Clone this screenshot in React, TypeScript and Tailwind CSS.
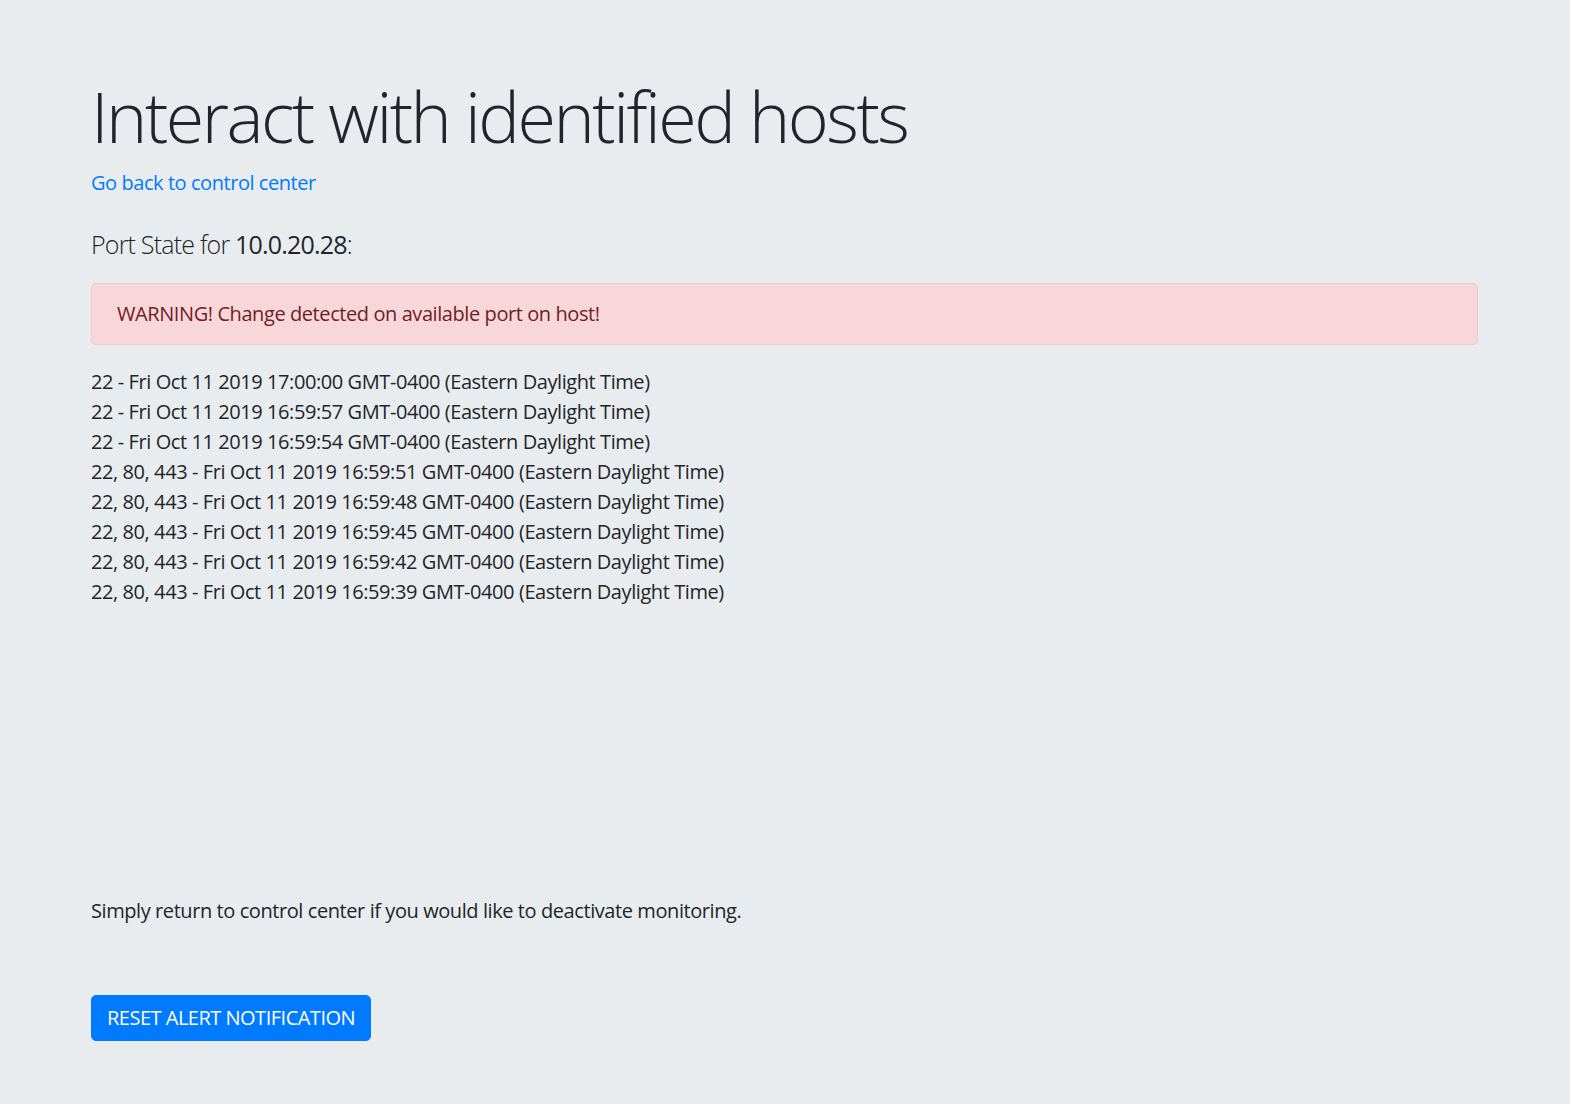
import React from "react";

const lines = [
  "22 - Fri Oct 11 2019 17:00:00 GMT-0400 (Eastern Daylight Time)",
  "22 - Fri Oct 11 2019 16:59:57 GMT-0400 (Eastern Daylight Time)",
  "22 - Fri Oct 11 2019 16:59:54 GMT-0400 (Eastern Daylight Time)",
  "22, 80, 443 - Fri Oct 11 2019 16:59:51 GMT-0400 (Eastern Daylight Time)",
  "22, 80, 443 - Fri Oct 11 2019 16:59:48 GMT-0400 (Eastern Daylight Time)",
  "22, 80, 443 - Fri Oct 11 2019 16:59:45 GMT-0400 (Eastern Daylight Time)",
  "22, 80, 443 - Fri Oct 11 2019 16:59:42 GMT-0400 (Eastern Daylight Time)",
  "22, 80, 443 - Fri Oct 11 2019 16:59:39 GMT-0400 (Eastern Daylight Time)",
];

export default function App() {
  return (
    <div className="min-h-[1104px] bg-[#e9ecef] text-[#212529] font-['Open_Sans',sans-serif] text-[20px] leading-[30px] tracking-[-0.021em]">
      <div className="pl-[91px] pr-[92px] pt-[74px] pb-[60px] flex flex-col">
        <h1 className="text-[70px] leading-[84px] font-light tracking-[-0.036em] m-0">
          Interact with identified hosts
        </h1>
        <a href="#" className="mt-[10px] self-start text-[#007bff] tracking-[-0.022em]">
          Go back to control center
        </a>
        <p className="mt-[27px] text-[25px] leading-[38px] font-light tracking-[-0.032em]">
          Port State for <span className="font-normal">10.0.20.28</span>:
        </p>
        <div className="mt-[20px] bg-[#f8d7da] border border-[#f5c6cb] text-[#721c24] rounded-[5px] px-[25px] py-[15px]">
          WARNING! Change detected on available port on host!
        </div>
        <div className="mt-[22px] flex flex-col">
          {lines.map((l, i) => (
            <div key={i}>{l}</div>
          ))}
        </div>
        <p className="mt-[289px]">
          Simply return to control center if you would like to deactivate monitoring.
        </p>
        <div className="mt-[69px]">
          <button className="bg-[#007bff] text-white uppercase rounded-[5px] px-[15px] py-[7px] leading-[30px] border border-[#007bff] tracking-[-0.025em]">
            Reset Alert Notification
          </button>
        </div>
      </div>
    </div>
  );
}
